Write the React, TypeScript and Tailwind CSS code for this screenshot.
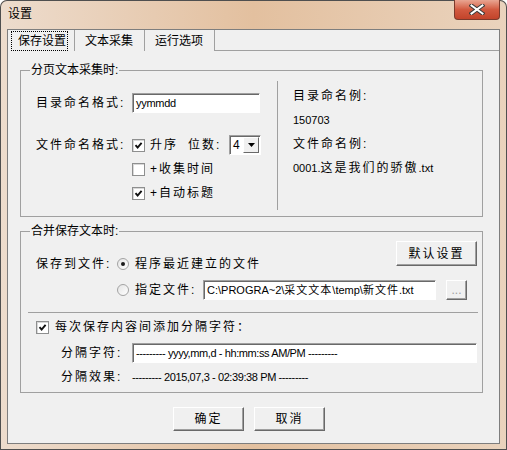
import React from "react";

const Check = ({ checked }: { checked?: boolean }) => (
  <span className="flex h-[13px] w-[13px] shrink-0 items-center justify-center border border-[#8e8f8f] bg-white shadow-[inset_1px_1px_0_#d8d8d8]">
    {checked && (
      <svg width="9" height="9" viewBox="0 0 9 9">
        <path d="M1.5 4.2 L3.6 6.5 L7.6 1.8" fill="none" stroke="#111" strokeWidth="1.9" />
      </svg>
    )}
  </span>
);

const Radio = ({ checked }: { checked?: boolean }) => (
  <span className="flex h-[12px] w-[12px] shrink-0 items-center justify-center rounded-full border border-[#a3a3a3] bg-gradient-to-br from-[#e4e4e4] to-white">
    {checked && <span className="h-[4px] w-[4px] rounded-full bg-[#1b1b1b]" />}
  </span>
);

const Sunken = ({ className, children }: { className: string; children?: React.ReactNode }) => (
  <div
    className={`flex h-[20px] items-center border border-t-[#a0a0a0] border-l-[#a0a0a0] border-r-white border-b-white bg-white shadow-[inset_1px_1px_0_#696969] ${className}`}
  >
    {children}
  </div>
);

const Btn = ({ className, children }: { className: string; children: React.ReactNode }) => (
  <div
    className={`flex items-center justify-center border border-t-white border-l-white border-r-[#696969] border-b-[#696969] bg-[#f0f0f0] shadow-[inset_-1px_-1px_0_#a0a0a0] text-[12px] ${className}`}
  >
    {children}
  </div>
);

const Group = ({ title, className, children }: { title: string; className: string; children: React.ReactNode }) => (
  <div className={`relative ml-[12px] w-[463px] border border-[#a0a0a0] ${className}`}>
    <span className="absolute -top-[8px] left-[9px] bg-[#f0f0f0] px-px text-[12px] leading-[14px]">{title}</span>
    {children}
  </div>
);

export default function App() {
  return (
    <div className="h-[450px] w-[507px] overflow-hidden rounded-t-[7px] bg-gradient-to-r from-[#eddccd] via-[#e3c09f] to-[#ead3bd] font-['Liberation_Sans','Noto_Sans_CJK_SC',sans-serif] text-black shadow-[inset_0_0_0_1px_#4f4f4f]">
      {/* title bar */}
      <div className="flex h-[29px] items-start">
        <span className="mt-[7px] pl-[8px] text-[12px] leading-[14px]">设置</span>
        <div className="ml-auto mr-[7px] flex h-[20px] w-[46px] items-center justify-center rounded-b-[4px] border border-t-0 border-[#7b3a2c] bg-gradient-to-b from-[#e8a592] via-[#d25a40] to-[#c2432a]">
          <svg width="16" height="11" viewBox="0 0 16 11">
            <path d="M2.5 1.5 L13.5 9.5 M13.5 1.5 L2.5 9.5" stroke="#3a3a3a" strokeWidth="4" strokeLinecap="square" />
            <path d="M2.5 1.5 L13.5 9.5 M13.5 1.5 L2.5 9.5" stroke="#fff" strokeWidth="2" strokeLinecap="square" />
          </svg>
        </div>
      </div>

      {/* client area */}
      <div className="ml-[7px] h-[415px] w-[493px] border border-[#7e7e7e] bg-[#f0f0f0]">
        {/* tabs */}
        <div className="flex h-[21px] text-[12px]">
          <div className="flex w-[67px] items-end border-r border-[#a0a0a0] pl-[3px]">
            <span className="flex h-[20px] items-center border border-dotted border-black pl-[6px] pr-[1px] leading-[14px]">保存设置</span>
          </div>
          <div className="flex w-[70px] items-center border-r border-[#a0a0a0] pl-[10px]">文本采集</div>
          <div className="flex w-[70px] items-center border-r border-[#a0a0a0] pl-[10px]">运行选项</div>
          <div className="flex-1 border-b border-[#a0a0a0]" />
        </div>

        {/* page split text */}
        <Group title="分页文本采集时:" className="mt-[19px] h-[147px]">
          <div className="flex text-[12px]">
            <div className="w-[256px] pl-[15px] pt-[22px]">
              <div className="flex h-[20px] items-center">
                <span className="w-[96px] tracking-[2px]">目录命名格式:</span>
                <Sunken className="w-[128px] pl-[3px] text-[11px] tracking-[-0.3px]">yymmdd</Sunken>
              </div>
              <div className="mt-[22px] flex h-[20px] items-center">
                <span className="w-[96px] tracking-[2px]">文件命名格式:</span>
                <Check checked />
                <span className="ml-[5px] w-[38px] tracking-[2px]">升序</span>
                <span className="w-[41px] tracking-[2px]">位数:</span>
                <Sunken className="w-[32px] justify-between pl-[3px] pr-px text-[12px]">
                  <span>4</span>
                  <span className="flex h-[16px] w-[16px] items-center justify-center border border-t-white border-l-white border-r-[#696969] border-b-[#696969] bg-[#f0f0f0]">
                    <svg width="7" height="4" viewBox="0 0 7 4">
                      <path d="M0 0 H7 L3.5 4 Z" fill="#000" />
                    </svg>
                  </span>
                </Sunken>
              </div>
              <div className="mt-[4px] flex h-[20px] items-center pl-[96px]">
                <Check />
                <span className="ml-[5px] tracking-[2px]">+收集时间</span>
              </div>
              <div className="mt-[4px] flex h-[20px] items-center pl-[96px]">
                <Check checked />
                <span className="ml-[5px] tracking-[2px]">+自动标题</span>
              </div>
            </div>
            <div className="mt-[10px] h-[129px] w-px bg-[#a0a0a0]" />
            <div className="pl-[15px] pt-[13px]">
              <div className="flex h-[24px] items-center tracking-[2px]">目录命名例:</div>
              <div className="flex h-[24px] items-center text-[11px]">150703</div>
              <div className="flex h-[24px] items-center tracking-[2px]">文件命名例:</div>
              <div className="flex h-[24px] items-center">
                <span className="text-[11px]">0001.</span>
                <span className="tracking-[2px]">这是我们的骄傲</span>
                <span className="text-[11px]">.txt</span>
              </div>
            </div>
          </div>
        </Group>

        {/* merge save */}
        <Group title="合并保存文本时:" className="mt-[14px] h-[162px]">
          <div className="text-[12px]">
            <div className="flex items-start">
              <div className="mt-[22px] flex h-[20px] items-center pl-[15px]">
                <span className="w-[81px] tracking-[2px]">保存到文件:</span>
                <Radio checked />
                <span className="ml-[6px] tracking-[2px]">程序最近建立的文件</span>
              </div>
              <Btn className="ml-auto mr-[5px] mt-[9px] h-[25px] w-[81px] tracking-[2px]">默认设置</Btn>
            </div>
            <div className="mt-[6px] flex h-[20px] items-center pl-[96px]">
              <Radio />
              <span className="ml-[6px] w-[68px] tracking-[2px]">指定文件:</span>
              <Sunken className="w-[233px] pl-[3px] text-[11px]">
                C:\PROGRA~2\<span className="tracking-[1px]">采文文本</span>\temp\<span className="tracking-[1px]">新文件</span>.txt
              </Sunken>
              <Btn className="ml-[10px] h-[20px] w-[21px] text-[11px] text-[#a0a0a0]">...</Btn>
            </div>
            <div className="ml-[7px] mr-[4px] mt-[12px] h-px bg-[#a0a0a0]" />
            <div className="mt-[4px] flex h-[20px] items-center pl-[15px]">
              <Check checked />
              <span className="ml-[6px] tracking-[2px]">每次保存内容间添加分隔字符：</span>
            </div>
            <div className="mt-[6px] flex h-[20px] items-center pl-[40px]">
              <span className="w-[71px] tracking-[2px]">分隔字符:</span>
              <Sunken className="w-[345px] pl-[3px] text-[11px] tracking-[-0.4px]">--------- yyyy,mm,d - hh:mm:ss AM/PM ---------</Sunken>
            </div>
            <div className="mt-[4px] flex h-[20px] items-center pl-[40px]">
              <span className="w-[71px] tracking-[2px]">分隔效果:</span>
              <span className="text-[11px] tracking-[-0.4px]">--------- 2015,07,3 - 02:39:38 PM ---------</span>
            </div>
          </div>
        </Group>

        {/* dialog buttons */}
        <div className="mt-[14px] flex gap-[10px] pl-[165px]">
          <Btn className="h-[24px] w-[71px] tracking-[2px]">确定</Btn>
          <Btn className="h-[24px] w-[71px] tracking-[2px]">取消</Btn>
        </div>
      </div>
    </div>
  );
}
